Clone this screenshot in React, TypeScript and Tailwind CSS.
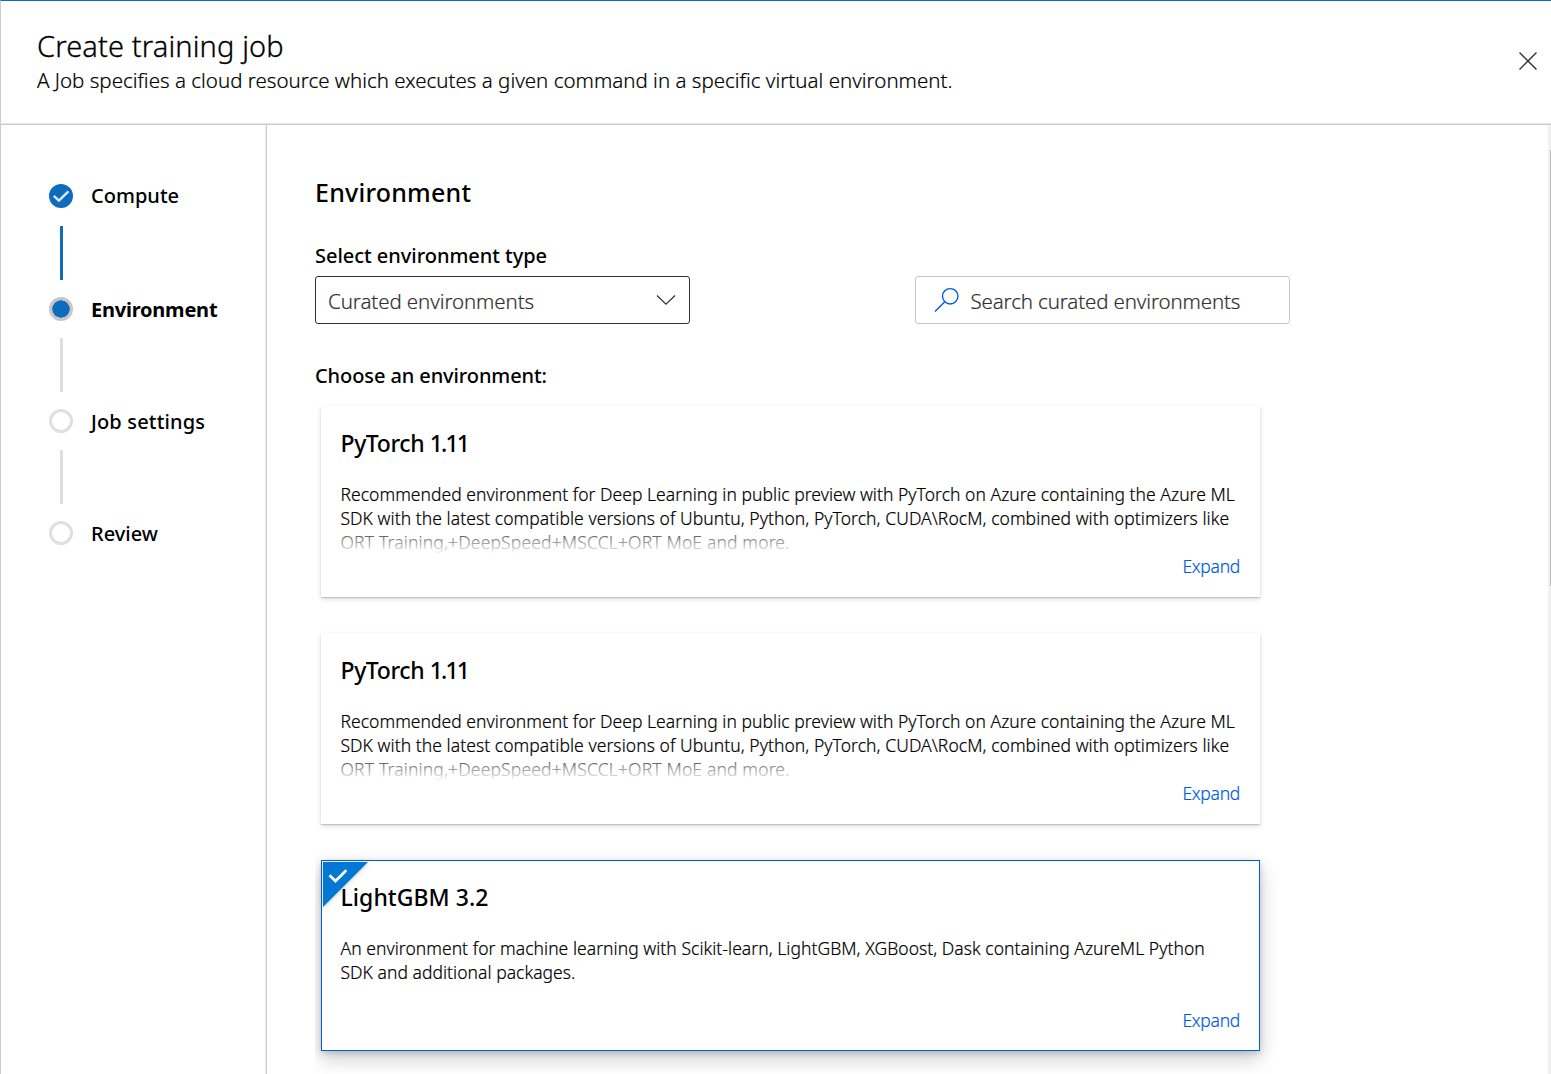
import React from "react";

type StepState = "done" | "current" | "todo";

const STEPS: { label: string; state: StepState; text: string }[] = [
  { label: "Compute", state: "done", text: "font-medium tracking-[0.02px]" },
  { label: "Environment", state: "current", text: "pt-0.5 font-bold tracking-[-0.22px]" },
  { label: "Job settings", state: "todo", text: "pt-0.5 font-medium tracking-[0.17px]" },
  { label: "Review", state: "todo", text: "pt-0.5 font-medium" },
];

const PYTORCH = [
  { text: "Recommended environment for Deep Learning in public preview with PyTorch on Azure containing the Azure ML", spacing: "tracking-[0.04px]" },
  { text: "SDK with the latest compatible versions of Ubuntu, Python, PyTorch, CUDA\\RocM, combined with optimizers like", spacing: "tracking-[0.06px]" },
  { text: "ORT Training,+DeepSpeed+MSCCL+ORT MoE and more.", spacing: "tracking-[0.155px]" },
];

const CARDS = [
  { name: "PyTorch ", version: "1.11", nameClass: "tracking-[-0.4px]", versionClass: "tracking-[-1.9px]", lines: PYTORCH, selected: false },
  { name: "PyTorch ", version: "1.11", nameClass: "tracking-[-0.4px]", versionClass: "tracking-[-1.9px]", lines: PYTORCH, selected: false },
  {
    name: "LightGBM ",
    version: "3.2",
    nameClass: "tracking-[0.05px]",
    versionClass: "tracking-[0.02px]",
    lines: [
      { text: "An environment for machine learning with Scikit-learn, LightGBM, XGBoost, Dask containing AzureML Python", spacing: "tracking-[0.045px]" },
      { text: "SDK and additional packages.", spacing: "tracking-[0.04px]" },
    ],
    selected: true,
  },
];

function StepIcon({ state }: { state: StepState }) {
  if (state === "done") {
    return (
      <svg width="24" height="24" viewBox="0 0 24 24" className="block">
        <circle cx="12" cy="12" r="12" fill="#0f6cbd" />
        <path d="M4.8 11.8 9.9 16.7 19.4 7.4" fill="none" stroke="#dbe9f6" strokeWidth="2.4" />
      </svg>
    );
  }
  if (state === "current") {
    return <div className="size-6 rounded-full border-[3px] border-[#c8c6c4] bg-[#0f6cbd] bg-clip-padding" />;
  }
  return <div className="size-6 rounded-full border-[3px] border-[#e1dfdd] bg-white" />;
}

function Steps() {
  return (
    <aside className="w-[266px] shrink-0 border-r border-[#cccccc] pl-12 pt-[59px] shadow-[inset_-1px_0_0_#ededed]">
      {STEPS.map((s, i) => (
        <React.Fragment key={s.label}>
          {i > 0 && (
            <div className={i === 1 ? "mb-[17px] ml-[11px] mt-[18px] h-[54px] w-[3px] bg-[#0f6cbd]" : "my-[17px] ml-[11px] h-[54px] w-[3px] bg-[#e1dfdd]"} />
          )}
          <div className="flex h-6 items-center gap-[18px]">
            <StepIcon state={s.state} />
            <span className={`text-[20px] leading-6 ${s.text}`}>{s.label}</span>
          </div>
        </React.Fragment>
      ))}
    </aside>
  );
}

function EnvironmentCard({ name, version, nameClass, versionClass, lines, selected }: (typeof CARDS)[number]) {
  return (
    <article
      className={
        selected
          ? "relative h-[191px] w-[939px] border border-[#015cda] bg-white pl-[18.5px] pr-[19px] pt-[21px] shadow-[0_8px_19px_rgba(0,0,0,0.2),0_2px_6px_rgba(0,0,0,0.16)]"
          : "relative h-[191px] w-[939px] bg-white pl-[19.5px] pr-5 pt-[22px] shadow-[0_2px_5px_rgba(0,0,0,0.15),0_1px_1px_rgba(0,0,0,0.15)]"
      }
    >
      {selected && (
        <svg width="50" height="50" viewBox="0 0 50 50" className="absolute left-px top-px drop-shadow-[0_1px_2px_rgba(0,0,0,0.2)]">
          <path d="M0 0H45L0 45Z" fill="#0078d4" />
          <path d="M6.5 13.2 12.5 19 23.3 8.2" fill="none" stroke="#fff" strokeWidth="2.7" />
        </svg>
      )}
      <h3 className="relative whitespace-pre text-[23px] font-medium leading-[30px]">
        <span className={nameClass}>{name}</span>
        <span className={versionClass}>{version}</span>
      </h3>
      <div className="relative mt-6 h-[72px] text-[17.5px] font-light leading-6 text-black [-webkit-text-stroke:0.2px]">
        {lines.map((l) => (
          <p key={l.text} className={`whitespace-nowrap ${l.spacing}`}>{l.text}</p>
        ))}
        {lines.length > 2 && (
          <div className="absolute inset-x-0 bottom-0 h-6 bg-linear-to-b from-white/20 to-white" />
        )}
      </div>
      <div className="flex justify-end">
        <a className="text-[17.5px] font-light leading-6 tracking-[-0.28px] text-[#015cda] [-webkit-text-stroke:0.2px]">Expand</a>
      </div>
    </article>
  );
}

export default function App() {
  return (
    <div className="flex h-[1074px] w-[1551px] flex-col overflow-hidden border-l border-t border-l-[#cccccc] border-t-[#0f6cbd] bg-white font-['Noto_Sans',sans-serif] text-black">
      <header className="flex h-[124px] shrink-0 items-start justify-between border-b border-[#cccccc] pl-9 pr-[13px] pt-[27px] shadow-[inset_0_-1px_0_#e8e8e8]">
        <div>
          <h1 className="text-[29px] font-light leading-9 tracking-[0.13px] [-webkit-text-stroke:0.3px]">Create training job</h1>
          <p className="mt-px text-[20.5px] font-light leading-[30px] tracking-[0.01px] text-black [-webkit-text-stroke:0.2px]">
            A Job specifies a cloud resource which executes a given command in a specific virtual environment.
          </p>
        </div>
        <svg width="20" height="20" viewBox="0 0 20 20" className="mt-[23px]">
          <path d="M1.5 1.5 18.5 18.5M18.5 1.5 1.5 18.5" fill="none" stroke="#323130" strokeWidth="1.4" />
        </svg>
      </header>
      <div className="flex min-h-0 flex-1">
        <Steps />
        <main className="flex min-w-0 flex-1 flex-col overflow-hidden pt-[50px]">
          <h2 className="ml-12 text-[25px] font-medium leading-[34px] tracking-[0.22px]">Environment</h2>
          <div className="ml-12 mt-[33px] flex w-[975px] items-end justify-between">
            <div>
              <label className="block text-[20px] font-medium leading-7 tracking-[-0.03px]">Select environment type</label>
              <div className="mt-1.5 flex h-12 w-[375px] items-center justify-between rounded-[3px] border border-[#323130] pl-3 pr-[13px]">
                <span className="mt-0.5 text-[20.5px] font-light leading-7 tracking-[-0.09px] text-[#323130] [-webkit-text-stroke:0.2px]">Curated environments</span>
                <svg width="20" height="12" viewBox="0 0 20 12">
                  <path d="M1 1.5 10 10.2 19 1.5" fill="none" stroke="#323130" strokeWidth="1.2" />
                </svg>
              </div>
            </div>
            <div className="flex h-12 w-[375px] items-center rounded-[3px] border border-[#c8c6c4] pl-[18px]">
              <svg width="26" height="26" viewBox="0 0 26 26">
                <circle cx="16.2" cy="9.3" r="7.7" fill="none" stroke="#015cda" strokeWidth="1.4" />
                <path d="M10.8 14.8 1 24.6" fill="none" stroke="#015cda" strokeWidth="1.4" />
              </svg>
              <span className="ml-[10.5px] mt-0.5 text-[20.5px] font-light leading-7 tracking-[-0.13px] text-[#323130] [-webkit-text-stroke:0.2px]">Search curated environments</span>
            </div>
          </div>
          <p className="ml-12 mt-[38px] text-[20px] font-medium leading-7 tracking-[-0.1px]">Choose an environment:</p>
          <div className="ml-12 flex flex-1 flex-col gap-9 overflow-hidden pl-1.5 pt-4">
            {CARDS.map((c, i) => (
              <EnvironmentCard key={i} {...c} />
            ))}
          </div>
        </main>
        <div className="w-[3px] shrink-0 bg-[#f0f0f0] pl-0.5 pt-[25px]">
          <div className="h-[436px] bg-[#bdbdbd]" />
        </div>
      </div>
    </div>
  );
}
